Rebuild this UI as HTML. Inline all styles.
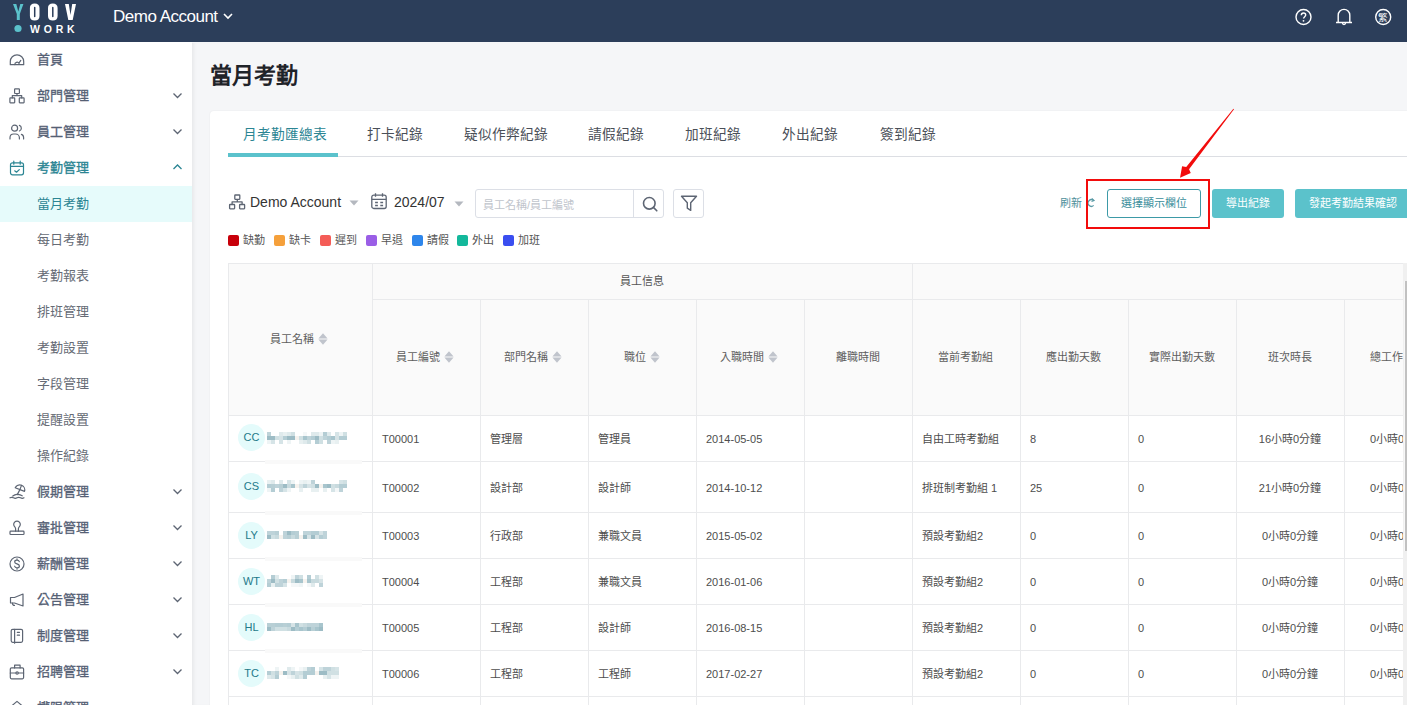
<!DOCTYPE html>
<html lang="zh-TW">
<head>
<meta charset="utf-8">
<style>
*{box-sizing:border-box;margin:0;padding:0}
html,body{width:1407px;height:705px;overflow:hidden;background:#f5f6f8;font-family:"Liberation Sans",sans-serif;color:#333}
.abs{position:absolute}
#hdr{position:absolute;left:0;top:0;width:1407px;height:42px;background:#2c3e5a}
#acct{position:absolute;left:113px;top:6px;color:#fff;font-size:17px;line-height:22px;letter-spacing:-0.5px}
#side{position:absolute;left:0;top:42px;width:192px;height:663px;background:#fff}
.mi{position:absolute;left:0;width:192px;height:36px;font-size:13px;line-height:36px;color:#556074;font-weight:normal;-webkit-text-stroke:0.3px currentColor}
.mi .t{position:absolute;left:37px;top:0}
.mi svg.ic{position:absolute;left:7px;top:8px;color:#5d6573}
.mi svg.ch{position:absolute;left:172px;top:13px;color:#5d6573}
.mi.sub{color:#666b75;font-weight:normal;-webkit-text-stroke:0}
.mi.act,.mi.act svg.ic,.mi.act svg.ch{color:#2b8593}
.mi.asub{background:#e6fbfb;color:#2b8593}
#main{position:absolute;left:192px;top:43px;width:1215px;height:662px;background:#f5f6f8;box-shadow:inset 4px 0 4px -3px rgba(0,0,0,.08)}
#title{position:absolute;left:210px;top:61px;font-size:22px;font-weight:bold;color:#1f2329;line-height:30px}
#card{position:absolute;left:210px;top:111px;width:1210px;height:600px;background:#fff;border-radius:4px;box-shadow:0 0 2px rgba(0,0,0,.07)}
.tab{position:absolute;top:125px;font-size:13.7px;line-height:20px;color:#4a4f58}
.tab.tact{color:#2b8593}
.tb{font-size:14px;line-height:18px;color:#333}
.ph{font-size:11px;line-height:14px;color:#c0c4cc}
.rf{font-size:11px;line-height:14px;color:#4f8f9b}
.btn-o{border:1px solid #3d9aa7;border-radius:3px;color:#3a8e9b;font-size:11px;line-height:27px;text-align:center;background:#fff}
.btn-f{border-radius:3px;background:#5bc2cb;color:#fff;font-size:11px;line-height:29px;text-align:center}
.legend{position:absolute;top:233px;font-size:11px;line-height:14px;color:#555}
.sq{position:absolute;top:235px;width:11px;height:11px;border-radius:2px}
.th{position:absolute;font-size:11px;line-height:36px;text-align:center;color:#555}
.thx{position:absolute;font-size:11px;line-height:16px;color:#5e5e5e;white-space:nowrap}
.td{position:absolute;font-size:11px;line-height:16px;color:#4d4d4d;white-space:nowrap}
.av{position:absolute;width:27px;height:27px;border-radius:50%;background:#e4fbfb;color:#23798a;font-size:11px;line-height:27px;text-align:center}
</style>
</head>
<body>
<div id="hdr">
  <svg class="abs" style="left:0;top:0" width="100" height="42" viewBox="0 0 100 42">
    <path d="M13 4h3.3l2 7.5 2-7.5h3.1l-3.6 10v6h-3v-6z" fill="#5bc2cc"/>
    <path d="M34.7 3.5c3.1 0 4.8 1.6 4.8 4.5v8c0 3-1.7 4.6-4.8 4.6s-4.8-1.6-4.8-4.6V8c0-2.9 1.7-4.5 4.8-4.5zm0 3.3c-.45 0-.75.3-.75.8v8.8c0 .5.3.8.75.8s.75-.3.75-.8V7.6c0-.5-.3-.8-.75-.8z" fill="#fff"/>
    <path d="M52.8 3.5c3.1 0 4.8 1.6 4.8 4.5v8c0 3-1.7 4.6-4.8 4.6s-4.8-1.6-4.8-4.6V8c0-2.9 1.7-4.5 4.8-4.5zm0 3.3c-.45 0-.75.3-.75.8v8.8c0 .5.3.8.75.8s.75-.3.75-.8V7.6c0-.5-.3-.8-.75-.8z" fill="#fff"/>
    <path d="M65 4h3.8l1.7 11 1.7-11H76l-3.3 16h-4.4z" fill="#fff"/>
    <circle cx="18" cy="28.5" r="3.6" fill="#5bc2cc"/>
    <text x="30" y="32.8" fill="#fff" font-family="Liberation Sans" font-weight="bold" font-size="10.5" letter-spacing="3.8">WORK</text>
  </svg>
  <div id="acct">Demo Account <svg width="12" height="10" viewBox="0 0 12 10" style="vertical-align:1px"><path d="M2 3l4 4 4-4" stroke="#fff" stroke-width="1.6" fill="none"/></svg></div>
  <svg class="abs" style="left:1294px;top:8px" width="20" height="20" viewBox="0 0 20 20">
    <circle cx="9.5" cy="9" r="7.5" stroke="#fff" stroke-width="1.4" fill="none"/>
    <path d="M7.3 7.2c0-1.3 1-2.2 2.2-2.2s2.2.9 2.2 2.1c0 1.6-2.1 1.6-2.1 3.4" stroke="#fff" stroke-width="1.4" fill="none"/>
    <circle cx="9.5" cy="12.8" r=".9" fill="#fff"/>
  </svg>
  <svg class="abs" style="left:1334px;top:8px" width="20" height="20" viewBox="0 0 20 20">
    <path d="M2 14.5h16M4.2 14.5V7.2a5.8 5.8 0 0 1 11.6 0v7.3" stroke="#fff" stroke-width="1.4" fill="none"/>
    <path d="M8.5 15a1.5 1.5 0 0 0 3 0" stroke="#fff" stroke-width="1.3" fill="none"/>
  </svg>
  <svg class="abs" style="left:1374px;top:8px" width="20" height="20" viewBox="0 0 20 20">
    <circle cx="9.2" cy="9" r="7.5" stroke="#fff" stroke-width="1.4" fill="none"/>
    <text x="9.2" y="12.6" text-anchor="middle" fill="#fff" font-size="9.5">繁</text>
  </svg>
</div>

<div id="side"></div>
<div class="mi" style="top:42px"><svg class="ic" width="20" height="20" viewBox="0 0 20 20" fill="none" stroke="currentColor" stroke-width="1.2" stroke-linecap="round" stroke-linejoin="round"><path d="M3.3 14.7V11.5a6.7 6.7 0 0 1 13.4 0v3.2z"/><path d="M7.8 14.6a2.3 2.3 0 0 1 4.3-1.2M11.9 13.1l1.9-2.7"/></svg><span class="t">首頁</span></div>
<div class="mi" style="top:78px"><svg class="ic" width="20" height="20" viewBox="0 0 20 20" fill="none" stroke="currentColor" stroke-width="1.2" stroke-linecap="round" stroke-linejoin="round"><rect x="7.6" y="2.9" width="4.8" height="4.6" rx=".5"/><rect x="2.9" y="11.9" width="4.8" height="4.9" rx=".5"/><rect x="12.3" y="11.9" width="4.8" height="4.9" rx=".5"/><path d="M10 7.5v2.1M5.3 11.9V9.6h9.4v2.3"/></svg><span class="t">部門管理</span><svg class="ch" width="11" height="9" viewBox="0 0 11 9" fill="none" stroke="currentColor" stroke-width="1.3"><path d="M1.5 2.5l4 4 4-4"/></svg></div>
<div class="mi" style="top:114px"><svg class="ic" width="20" height="20" viewBox="0 0 20 20" fill="none" stroke="currentColor" stroke-width="1.2" stroke-linecap="round" stroke-linejoin="round"><circle cx="7.6" cy="6.2" r="3"/><path d="M3 17v-1.3C3 13.6 4.6 12 6.7 12h1.9c2.1 0 3.8 1.6 3.8 3.7V17"/><path d="M12.4 3.4a3 3 0 0 1 0 5.6M14.4 12.3c1.4.4 2.2 1.6 2.2 3.2V17"/></svg><span class="t">員工管理</span><svg class="ch" width="11" height="9" viewBox="0 0 11 9" fill="none" stroke="currentColor" stroke-width="1.3"><path d="M1.5 2.5l4 4 4-4"/></svg></div>
<div class="mi act" style="top:150px"><svg class="ic" width="20" height="20" viewBox="0 0 20 20" fill="none" stroke="currentColor" stroke-width="1.2" stroke-linecap="round" stroke-linejoin="round"><rect x="3.5" y="4.8" width="13" height="12" rx="2"/><path d="M3.5 8.3h13M6.8 3.2v3M13.2 3.2v3M7.7 12.8l1.8 1.4 2.8-2.6"/></svg><span class="t">考勤管理</span><svg class="ch" width="11" height="9" viewBox="0 0 11 9" fill="none" stroke="currentColor" stroke-width="1.3"><path d="M1.5 6l4-4 4 4"/></svg></div>
<div class="mi sub asub" style="top:186px"><span class="t">當月考勤</span></div>
<div class="mi sub" style="top:222px"><span class="t">每日考勤</span></div>
<div class="mi sub" style="top:258px"><span class="t">考勤報表</span></div>
<div class="mi sub" style="top:294px"><span class="t">排班管理</span></div>
<div class="mi sub" style="top:330px"><span class="t">考勤設置</span></div>
<div class="mi sub" style="top:366px"><span class="t">字段管理</span></div>
<div class="mi sub" style="top:402px"><span class="t">提醒設置</span></div>
<div class="mi sub" style="top:438px"><span class="t">操作紀錄</span></div>
<div class="mi" style="top:474px"><svg class="ic" width="20" height="20" viewBox="0 0 20 20" fill="none" stroke="currentColor" stroke-width="1.2" stroke-linecap="round" stroke-linejoin="round"><path d="M8.2 5.8a5 5 0 0 1 9.3 3.6z"/><path d="M12.9 7.6l1.6-4.2M12.9 7.6l-2.6 5"/><path d="M5.8 14q2.4-2 5-1.6t4.4 1.4"/><path d="M3 15.8q1.7-1 3.5 0t3.5 0 3.5 0 3.5 0"/></svg><span class="t">假期管理</span><svg class="ch" width="11" height="9" viewBox="0 0 11 9" fill="none" stroke="currentColor" stroke-width="1.3"><path d="M1.5 2.5l4 4 4-4"/></svg></div>
<div class="mi" style="top:510px"><svg class="ic" width="20" height="20" viewBox="0 0 20 20" fill="none" stroke="currentColor" stroke-width="1.2" stroke-linecap="round" stroke-linejoin="round"><path d="M8.6 13.2v-2.4c0-.8-.3-1.3-.8-1.9a3.3 3.3 0 1 1 4.4 0c-.5.6-.8 1.1-.8 1.9v2.4"/><rect x="3" y="13.2" width="14" height="3.3" rx=".8"/></svg><span class="t">審批管理</span><svg class="ch" width="11" height="9" viewBox="0 0 11 9" fill="none" stroke="currentColor" stroke-width="1.3"><path d="M1.5 2.5l4 4 4-4"/></svg></div>
<div class="mi" style="top:546px"><svg class="ic" width="20" height="20" viewBox="0 0 20 20" fill="none" stroke="currentColor" stroke-width="1.2" stroke-linecap="round" stroke-linejoin="round"><circle cx="10" cy="10" r="7"/><path d="M12.3 7.6c-.3-1-1.2-1.5-2.3-1.5-1.3 0-2.3.7-2.3 1.8 0 2.4 4.7 1.5 4.7 4 0 1.1-1 1.9-2.4 1.9-1.2 0-2.1-.6-2.4-1.6M10 4.8v1.3M10 13.8v1.4"/></svg><span class="t">薪酬管理</span><svg class="ch" width="11" height="9" viewBox="0 0 11 9" fill="none" stroke="currentColor" stroke-width="1.3"><path d="M1.5 2.5l4 4 4-4"/></svg></div>
<div class="mi" style="top:582px"><svg class="ic" width="20" height="20" viewBox="0 0 20 20" fill="none" stroke="currentColor" stroke-width="1.2" stroke-linecap="round" stroke-linejoin="round"><path d="M3.5 7.5h4l8.5-3.5v12L7.5 13h-4z"/><path d="M5.5 13.2c0 1.3.8 2.2 2 2.2"/></svg><span class="t">公告管理</span><svg class="ch" width="11" height="9" viewBox="0 0 11 9" fill="none" stroke="currentColor" stroke-width="1.3"><path d="M1.5 2.5l4 4 4-4"/></svg></div>
<div class="mi" style="top:618px"><svg class="ic" width="20" height="20" viewBox="0 0 20 20" fill="none" stroke="currentColor" stroke-width="1.2" stroke-linecap="round" stroke-linejoin="round"><rect x="4.2" y="3.3" width="11.4" height="13" rx="1.5"/><path d="M7.6 3.3v13.9M10.3 6.3h2.2M10.3 9.2h2.2"/></svg><span class="t">制度管理</span><svg class="ch" width="11" height="9" viewBox="0 0 11 9" fill="none" stroke="currentColor" stroke-width="1.3"><path d="M1.5 2.5l4 4 4-4"/></svg></div>
<div class="mi" style="top:654px"><svg class="ic" width="20" height="20" viewBox="0 0 20 20" fill="none" stroke="currentColor" stroke-width="1.2" stroke-linecap="round" stroke-linejoin="round"><rect x="3.3" y="5.9" width="13.3" height="10.9" rx="1.2"/><path d="M7.6 5.9V3.2h5.5v2.7M3.3 11h5.6M11.3 11h5.3"/><circle cx="10.1" cy="11" r="1.2"/></svg><span class="t">招聘管理</span><svg class="ch" width="11" height="9" viewBox="0 0 11 9" fill="none" stroke="currentColor" stroke-width="1.3"><path d="M1.5 2.5l4 4 4-4"/></svg></div>
<div class="mi" style="top:690px"><svg class="ic" width="20" height="20" viewBox="0 0 20 20" fill="none" stroke="currentColor" stroke-width="1.2" stroke-linecap="round" stroke-linejoin="round"><path d="M2.8 9.5L10 3.4l7.2 6.1"/></svg><span class="t">權限管理</span><svg class="ch" width="11" height="9" viewBox="0 0 11 9" fill="none" stroke="currentColor" stroke-width="1.3"><path d="M1.5 2.5l4 4 4-4"/></svg></div>
<div id="main"></div>
<div id="title">當月考勤</div>
<div id="card"></div>
<!--MAIN-->
<div class="tab tact" style="left:243px">月考勤匯總表</div>
<div class="tab" style="left:367px">打卡紀錄</div>
<div class="tab" style="left:464px">疑似作弊紀錄</div>
<div class="tab" style="left:588px">請假紀錄</div>
<div class="tab" style="left:685px">加班紀錄</div>
<div class="tab" style="left:782px">外出紀錄</div>
<div class="tab" style="left:880px">簽到紀錄</div>
<div class="abs" style="left:228px;top:156px;width:1179px;height:1px;background:#dcdee3"></div>
<div class="abs" style="left:228px;top:153px;width:110px;height:4px;background:#5bc2cc"></div>
<svg class="abs" style="left:227px;top:193px" width="20" height="18" viewBox="0 0 20 18" fill="none" stroke="#5d6573" stroke-width="1.3" stroke-linejoin="round">
<rect x="7.8" y="2" width="5" height="4.3" rx=".5"/><rect x="2.6" y="11.5" width="5" height="4.3" rx=".5"/><rect x="12.6" y="11.5" width="5" height="4.3" rx=".5"/><path d="M10.3 6.3v2.6M5.1 11.5V8.9h10v2.6"/></svg>
<div class="abs tb" style="left:250px;top:193px">Demo Account</div>
<svg class="abs" style="left:349px;top:200px" width="10" height="6" viewBox="0 0 10 6"><path d="M0.5 0.5h9l-4.5 5z" fill="#b4b8bf"/></svg>
<svg class="abs" style="left:370px;top:192px" width="18" height="18" viewBox="0 0 18 18" fill="none" stroke="#5d6573" stroke-width="1.3">
<rect x="1.8" y="3.2" width="14.4" height="13.3" rx="2"/><path d="M1.8 7.3h14.4M5.5 1.3v3.4M12.5 1.3v3.4"/><path d="M5.1 10.4h2.8M10.3 10.4h2.8M5.1 13.4h2.8M10.3 13.4h2.8" stroke-width="1.5"/></svg>
<div class="abs tb" style="left:394px;top:193px">2024/07</div>
<svg class="abs" style="left:454px;top:201px" width="10" height="6" viewBox="0 0 10 6"><path d="M0.5 0.5h9l-4.5 5z" fill="#b4b8bf"/></svg>
<div class="abs" style="left:475px;top:189px;width:189px;height:29px;border:1px solid #dcdfe6;border-radius:3px;background:#fff"></div>
<div class="abs" style="left:633px;top:190px;width:1px;height:27px;background:#dcdfe6"></div>
<div class="abs ph" style="left:483px;top:197.5px">員工名稱/員工編號</div>
<svg class="abs" style="left:640px;top:194px" width="20" height="20" viewBox="0 0 20 20" fill="none" stroke="#5d6573" stroke-width="1.6"><circle cx="9.3" cy="9.3" r="5.8"/><path d="M13.4 13.4l3.4 3.4" stroke-linecap="round"/></svg>
<div class="abs" style="left:673px;top:189px;width:31px;height:29px;border:1px solid #dcdfe6;border-radius:3px;background:#fff"></div>
<svg class="abs" style="left:679px;top:194px" width="20" height="18" viewBox="0 0 20 18" fill="none" stroke="#5d6573" stroke-width="1.4" stroke-linejoin="round"><path d="M2.5 2.3h15l-5.8 6.5v7.6l-3.4-2.2V8.8z"/></svg>
<div class="abs rf" style="left:1060px;top:196px">刷新</div>
<svg class="abs" style="left:1086px;top:197px" width="10" height="12" viewBox="0 0 10 12" fill="none" stroke="#5a9aa6" stroke-width="1.3"><path d="M7.6 3.6A3.3 3.3 0 1 0 7.6 8.4"/><path d="M5.8 1.5l2.3 2.1-2.6 1" stroke-width="1.1"/></svg>
<div class="abs btn-o" style="left:1107px;top:189px;width:94px;height:29px">選擇顯示欄位</div>
<div class="abs btn-f" style="left:1212px;top:189px;width:72px;height:29px">導出紀錄</div>
<div class="abs btn-f" style="left:1295px;top:189px;width:116px;height:29px;padding-left:14px;text-align:left">發起考勤結果確認</div>
<div class="abs" style="left:1086px;top:179px;width:124px;height:50px;border:2px solid #f20c0c"></div>
<svg class="abs" style="left:1170px;top:105px" width="70" height="80" viewBox="0 0 70 80"><path d="M64 4.25L19.07 64.2 20.75 68.06 10.04 72.87 12.09 61.3 16.23 62 63.39 3.75z" fill="#f20c0c"/></svg>
<div class="sq" style="left:228px;background:#c8000a"></div><div class="legend" style="left:243px">缺勤</div>
<div class="sq" style="left:274px;background:#f5a03b"></div><div class="legend" style="left:289px">缺卡</div>
<div class="sq" style="left:320px;background:#f45c57"></div><div class="legend" style="left:335px">遲到</div>
<div class="sq" style="left:366px;background:#9a5ee6"></div><div class="legend" style="left:381px">早退</div>
<div class="sq" style="left:412px;background:#2e86eb"></div><div class="legend" style="left:427px">請假</div>
<div class="sq" style="left:457px;background:#13b89b"></div><div class="legend" style="left:472px">外出</div>
<div class="sq" style="left:503px;background:#3a4ef0"></div><div class="legend" style="left:518px">加班</div>
<!--TABLE-->
<div class="abs" style="left:228px;top:263px;width:1200px;height:152px;background:#fafafa"></div>
<div class="abs" style="left:228px;top:263px;width:1200px;height:1px;background:#e9eaec"></div>
<div class="abs" style="left:372px;top:299px;width:1100px;height:1px;background:#e9eaec"></div>
<div class="abs" style="left:228px;top:415px;width:1200px;height:1px;background:#e9eaec"></div>
<div class="abs" style="left:228px;top:461px;width:1200px;height:1px;background:#e9eaec"></div>
<div class="abs" style="left:228px;top:512px;width:1200px;height:1px;background:#e9eaec"></div>
<div class="abs" style="left:228px;top:558px;width:1200px;height:1px;background:#e9eaec"></div>
<div class="abs" style="left:228px;top:604px;width:1200px;height:1px;background:#e9eaec"></div>
<div class="abs" style="left:228px;top:650px;width:1200px;height:1px;background:#e9eaec"></div>
<div class="abs" style="left:228px;top:696px;width:1200px;height:1px;background:#e9eaec"></div>
<div class="abs" style="left:228px;top:742px;width:1200px;height:1px;background:#e9eaec"></div>
<div class="abs" style="left:228px;top:263px;width:1px;height:500px;background:#e9eaec"></div>
<div class="abs" style="left:372px;top:263px;width:1px;height:442px;background:#e9eaec"></div>
<div class="abs" style="left:480px;top:299px;width:1px;height:406px;background:#e9eaec"></div>
<div class="abs" style="left:588px;top:299px;width:1px;height:406px;background:#e9eaec"></div>
<div class="abs" style="left:696px;top:299px;width:1px;height:406px;background:#e9eaec"></div>
<div class="abs" style="left:804px;top:299px;width:1px;height:406px;background:#e9eaec"></div>
<div class="abs" style="left:912px;top:263px;width:1px;height:442px;background:#e9eaec"></div>
<div class="abs" style="left:1020px;top:299px;width:1px;height:406px;background:#e9eaec"></div>
<div class="abs" style="left:1128px;top:299px;width:1px;height:406px;background:#e9eaec"></div>
<div class="abs" style="left:1236px;top:299px;width:1px;height:406px;background:#e9eaec"></div>
<div class="abs" style="left:1344px;top:299px;width:1px;height:406px;background:#e9eaec"></div>
<div class="th" style="left:372px;top:263px;width:540px;height:36px">員工信息</div>
<div class="thx" style="left:270px;top:331px">員工名稱</div>
<svg class="abs" style="left:318px;top:333px" width="10" height="12" viewBox="0 0 10 12"><path d="M5 0.3L9.6 5.4H0.4z M5 11.7L9.6 6.6H0.4z" fill="#c0c4cc"/></svg>
<div class="thx" style="left:396px;top:349px">員工編號</div>
<svg class="abs" style="left:444px;top:351px" width="10" height="12" viewBox="0 0 10 12"><path d="M5 0.3L9.6 5.4H0.4z M5 11.7L9.6 6.6H0.4z" fill="#c0c4cc"/></svg>
<div class="thx" style="left:504px;top:349px">部門名稱</div>
<svg class="abs" style="left:552px;top:351px" width="10" height="12" viewBox="0 0 10 12"><path d="M5 0.3L9.6 5.4H0.4z M5 11.7L9.6 6.6H0.4z" fill="#c0c4cc"/></svg>
<div class="thx" style="left:624px;top:349px">職位</div>
<svg class="abs" style="left:650px;top:351px" width="10" height="12" viewBox="0 0 10 12"><path d="M5 0.3L9.6 5.4H0.4z M5 11.7L9.6 6.6H0.4z" fill="#c0c4cc"/></svg>
<div class="thx" style="left:720px;top:349px">入職時間</div>
<svg class="abs" style="left:768px;top:351px" width="10" height="12" viewBox="0 0 10 12"><path d="M5 0.3L9.6 5.4H0.4z M5 11.7L9.6 6.6H0.4z" fill="#c0c4cc"/></svg>
<div class="thx" style="left:836px;top:349px">離職時間</div>
<div class="thx" style="left:938px;top:349px">當前考勤組</div>
<div class="thx" style="left:1046px;top:349px">應出勤天數</div>
<div class="thx" style="left:1149px;top:349px">實際出勤天數</div>
<div class="thx" style="left:1268px;top:349px">班次時長</div>
<div class="thx" style="left:1370px;top:349px">總工作時長</div>
<div class="av" style="left:238px;top:424px">CC</div>
<svg class="abs" style="left:267px;top:432px" width="84" height="12"><rect x="0" y="0" width="4" height="4" fill="#bed3d9"/><rect x="0" y="4" width="4" height="4" fill="#9dbcc5"/><rect x="0" y="8" width="4" height="4" fill="#eef4f5"/><rect x="4" y="4" width="4" height="4" fill="#9dbcc5"/><rect x="4" y="8" width="4" height="4" fill="#d6e4e7"/><rect x="8" y="4" width="4" height="4" fill="#d0e0e3"/><rect x="12" y="0" width="4" height="4" fill="#dfeaec"/><rect x="12" y="4" width="4" height="4" fill="#d6e3e6"/><rect x="12" y="8" width="4" height="4" fill="#d6e4e7"/><rect x="16" y="0" width="4" height="4" fill="#e8f0f1"/><rect x="16" y="4" width="4" height="4" fill="#b4cdd4"/><rect x="20" y="0" width="4" height="4" fill="#dfeaec"/><rect x="20" y="4" width="4" height="4" fill="#9dbcc5"/><rect x="20" y="8" width="4" height="4" fill="#eef4f5"/><rect x="24" y="0" width="4" height="4" fill="#d0e0e3"/><rect x="24" y="4" width="4" height="4" fill="#9dbcc5"/><rect x="28" y="4" width="4" height="4" fill="#f5f2ee"/><rect x="32" y="4" width="4" height="4" fill="#d0e0e3"/><rect x="32" y="8" width="4" height="4" fill="#e8f0f1"/><rect x="36" y="0" width="4" height="4" fill="#f4f7f8"/><rect x="36" y="4" width="4" height="4" fill="#a8c5cd"/><rect x="36" y="8" width="4" height="4" fill="#dfeaec"/><rect x="40" y="4" width="4" height="4" fill="#bed3d9"/><rect x="40" y="8" width="4" height="4" fill="#d0e0e3"/><rect x="44" y="0" width="4" height="4" fill="#dfeaec"/><rect x="44" y="4" width="4" height="4" fill="#b4cdd4"/><rect x="48" y="0" width="4" height="4" fill="#dfeaec"/><rect x="48" y="4" width="4" height="4" fill="#9dbcc5"/><rect x="48" y="8" width="4" height="4" fill="#b4cdd4"/><rect x="52" y="0" width="4" height="4" fill="#eef4f5"/><rect x="52" y="4" width="4" height="4" fill="#d0e0e3"/><rect x="52" y="8" width="4" height="4" fill="#d0e0e3"/><rect x="56" y="0" width="4" height="4" fill="#b4cdd4"/><rect x="56" y="4" width="4" height="4" fill="#bed3d9"/><rect x="60" y="0" width="4" height="4" fill="#dfeaec"/><rect x="60" y="4" width="4" height="4" fill="#b4cdd4"/><rect x="60" y="8" width="4" height="4" fill="#bed3d9"/><rect x="64" y="4" width="4" height="4" fill="#a8c5cd"/><rect x="64" y="8" width="4" height="4" fill="#eef4f5"/><rect x="68" y="0" width="4" height="4" fill="#d6e4e7"/><rect x="68" y="4" width="4" height="4" fill="#d6e3e6"/><rect x="68" y="8" width="4" height="4" fill="#e8f0f1"/><rect x="72" y="0" width="4" height="4" fill="#eef4f5"/><rect x="72" y="4" width="4" height="4" fill="#b4cdd4"/><rect x="76" y="0" width="4" height="4" fill="#d0e0e3"/><rect x="76" y="4" width="4" height="4" fill="#b4cdd4"/></svg>
<div class="td" style="left:382px;top:431px">T00001</div>
<div class="td" style="left:490px;top:431px">管理層</div>
<div class="td" style="left:598px;top:431px">管理員</div>
<div class="td" style="left:706px;top:431px">2014-05-05</div>
<div class="td" style="left:922px;top:431px">自由工時考勤組</div>
<div class="td" style="left:1030px;top:431px">8</div>
<div class="td" style="left:1138px;top:431px">0</div>
<div class="td" style="left:1236px;width:108px;text-align:center;top:431px">16小時0分鐘</div>
<div class="td" style="left:1344px;width:108px;text-align:center;top:431px">0小時0分鐘</div>
<div class="av" style="left:238px;top:473px">CS</div>
<svg class="abs" style="left:267px;top:480px" width="84" height="12"><rect x="0" y="0" width="4" height="4" fill="#e8f0f1"/><rect x="0" y="4" width="4" height="4" fill="#b4cdd4"/><rect x="0" y="8" width="4" height="4" fill="#eef4f5"/><rect x="4" y="0" width="4" height="4" fill="#dfeaec"/><rect x="4" y="4" width="4" height="4" fill="#b8cfd5"/><rect x="4" y="8" width="4" height="4" fill="#b4cdd4"/><rect x="8" y="4" width="4" height="4" fill="#bed3d9"/><rect x="12" y="0" width="4" height="4" fill="#dfeaec"/><rect x="12" y="4" width="4" height="4" fill="#b8cfd5"/><rect x="12" y="8" width="4" height="4" fill="#bed3d9"/><rect x="16" y="4" width="4" height="4" fill="#9dbcc5"/><rect x="16" y="8" width="4" height="4" fill="#d6e4e7"/><rect x="20" y="0" width="4" height="4" fill="#d6e4e7"/><rect x="20" y="4" width="4" height="4" fill="#c8dade"/><rect x="20" y="8" width="4" height="4" fill="#eef4f5"/><rect x="24" y="0" width="4" height="4" fill="#eef4f5"/><rect x="24" y="4" width="4" height="4" fill="#a8c5cd"/><rect x="28" y="4" width="4" height="4" fill="#f5f2ee"/><rect x="32" y="0" width="4" height="4" fill="#eef4f5"/><rect x="32" y="4" width="4" height="4" fill="#d6e3e6"/><rect x="32" y="8" width="4" height="4" fill="#e8f0f1"/><rect x="36" y="0" width="4" height="4" fill="#e8f0f1"/><rect x="36" y="4" width="4" height="4" fill="#bed3d9"/><rect x="40" y="0" width="4" height="4" fill="#eef4f5"/><rect x="40" y="4" width="4" height="4" fill="#d6e3e6"/><rect x="44" y="0" width="4" height="4" fill="#bed3d9"/><rect x="44" y="4" width="4" height="4" fill="#d0e0e3"/><rect x="44" y="8" width="4" height="4" fill="#e8f0f1"/><rect x="48" y="4" width="4" height="4" fill="#9dbcc5"/><rect x="48" y="8" width="4" height="4" fill="#e8f0f1"/><rect x="52" y="4" width="4" height="4" fill="#f5f2ee"/><rect x="56" y="4" width="4" height="4" fill="#a8c5cd"/><rect x="56" y="8" width="4" height="4" fill="#e8f0f1"/><rect x="60" y="4" width="4" height="4" fill="#9dbcc5"/><rect x="64" y="4" width="4" height="4" fill="#d0e0e3"/><rect x="64" y="8" width="4" height="4" fill="#d6e4e7"/><rect x="68" y="4" width="4" height="4" fill="#c8dade"/><rect x="68" y="8" width="4" height="4" fill="#f4f7f8"/><rect x="72" y="0" width="4" height="4" fill="#d6e4e7"/><rect x="72" y="4" width="4" height="4" fill="#b4cdd4"/><rect x="72" y="8" width="4" height="4" fill="#bed3d9"/><rect x="76" y="0" width="4" height="4" fill="#d0e0e3"/><rect x="76" y="4" width="4" height="4" fill="#b4cdd4"/></svg>
<div class="td" style="left:382px;top:480px">T00002</div>
<div class="td" style="left:490px;top:480px">設計部</div>
<div class="td" style="left:598px;top:480px">設計師</div>
<div class="td" style="left:706px;top:480px">2014-10-12</div>
<div class="td" style="left:922px;top:480px">排班制考勤組 1</div>
<div class="td" style="left:1030px;top:480px">25</div>
<div class="td" style="left:1138px;top:480px">0</div>
<div class="td" style="left:1236px;width:108px;text-align:center;top:480px">21小時0分鐘</div>
<div class="td" style="left:1344px;width:108px;text-align:center;top:480px">0小時0分鐘</div>
<div class="av" style="left:238px;top:522px">LY</div>
<svg class="abs" style="left:267px;top:531px" width="64" height="8"><rect x="0" y="0" width="4" height="4" fill="#bed3d9"/><rect x="0" y="4" width="4" height="4" fill="#9dbcc5"/><rect x="4" y="0" width="4" height="4" fill="#bed3d9"/><rect x="4" y="4" width="4" height="4" fill="#d0e0e3"/><rect x="8" y="0" width="4" height="4" fill="#b8cfd5"/><rect x="8" y="4" width="4" height="4" fill="#c8dade"/><rect x="12" y="4" width="4" height="4" fill="#f5f2ee"/><rect x="16" y="0" width="4" height="4" fill="#bed3d9"/><rect x="16" y="4" width="4" height="4" fill="#bed3d9"/><rect x="20" y="0" width="4" height="4" fill="#9dbcc5"/><rect x="20" y="4" width="4" height="4" fill="#b8cfd5"/><rect x="24" y="0" width="4" height="4" fill="#b4cdd4"/><rect x="24" y="4" width="4" height="4" fill="#c8dade"/><rect x="28" y="0" width="4" height="4" fill="#b8cfd5"/><rect x="28" y="4" width="4" height="4" fill="#b8cfd5"/><rect x="32" y="4" width="4" height="4" fill="#f5f2ee"/><rect x="36" y="0" width="4" height="4" fill="#bed3d9"/><rect x="36" y="4" width="4" height="4" fill="#9dbcc5"/><rect x="40" y="0" width="4" height="4" fill="#bed3d9"/><rect x="40" y="4" width="4" height="4" fill="#d6e3e6"/><rect x="44" y="0" width="4" height="4" fill="#b4cdd4"/><rect x="44" y="4" width="4" height="4" fill="#9dbcc5"/><rect x="48" y="0" width="4" height="4" fill="#b4cdd4"/><rect x="48" y="4" width="4" height="4" fill="#d6e3e6"/><rect x="52" y="0" width="4" height="4" fill="#d6e3e6"/><rect x="52" y="4" width="4" height="4" fill="#b4cdd4"/><rect x="56" y="0" width="4" height="4" fill="#bed3d9"/><rect x="56" y="4" width="4" height="4" fill="#bed3d9"/></svg>
<div class="td" style="left:382px;top:528px">T00003</div>
<div class="td" style="left:490px;top:528px">行政部</div>
<div class="td" style="left:598px;top:528px">兼職文員</div>
<div class="td" style="left:706px;top:528px">2015-05-02</div>
<div class="td" style="left:922px;top:528px">預設考勤組2</div>
<div class="td" style="left:1030px;top:528px">0</div>
<div class="td" style="left:1138px;top:528px">0</div>
<div class="td" style="left:1236px;width:108px;text-align:center;top:528px">0小時0分鐘</div>
<div class="td" style="left:1344px;width:108px;text-align:center;top:528px">0小時0分鐘</div>
<div class="av" style="left:238px;top:568px">WT</div>
<svg class="abs" style="left:267px;top:575px" width="60" height="12"><rect x="0" y="4" width="4" height="4" fill="#bed3d9"/><rect x="0" y="8" width="4" height="4" fill="#b4cdd4"/><rect x="4" y="0" width="4" height="4" fill="#b4cdd4"/><rect x="4" y="4" width="4" height="4" fill="#9dbcc5"/><rect x="4" y="8" width="4" height="4" fill="#e8f0f1"/><rect x="8" y="0" width="4" height="4" fill="#dfeaec"/><rect x="8" y="4" width="4" height="4" fill="#d0e0e3"/><rect x="8" y="8" width="4" height="4" fill="#bed3d9"/><rect x="12" y="4" width="4" height="4" fill="#bed3d9"/><rect x="12" y="8" width="4" height="4" fill="#bed3d9"/><rect x="16" y="4" width="4" height="4" fill="#b4cdd4"/><rect x="16" y="8" width="4" height="4" fill="#d6e4e7"/><rect x="20" y="4" width="4" height="4" fill="#f5f2ee"/><rect x="24" y="0" width="4" height="4" fill="#eef4f5"/><rect x="24" y="4" width="4" height="4" fill="#c8dade"/><rect x="24" y="8" width="4" height="4" fill="#f4f7f8"/><rect x="28" y="0" width="4" height="4" fill="#bed3d9"/><rect x="28" y="4" width="4" height="4" fill="#9dbcc5"/><rect x="28" y="8" width="4" height="4" fill="#f4f7f8"/><rect x="32" y="0" width="4" height="4" fill="#d0e0e3"/><rect x="32" y="4" width="4" height="4" fill="#a8c5cd"/><rect x="32" y="8" width="4" height="4" fill="#eef4f5"/><rect x="36" y="4" width="4" height="4" fill="#f5f2ee"/><rect x="40" y="0" width="4" height="4" fill="#b4cdd4"/><rect x="40" y="4" width="4" height="4" fill="#a8c5cd"/><rect x="40" y="8" width="4" height="4" fill="#f4f7f8"/><rect x="44" y="4" width="4" height="4" fill="#c8dade"/><rect x="44" y="8" width="4" height="4" fill="#dfeaec"/><rect x="48" y="0" width="4" height="4" fill="#d0e0e3"/><rect x="48" y="4" width="4" height="4" fill="#c8dade"/><rect x="52" y="0" width="4" height="4" fill="#eef4f5"/><rect x="52" y="4" width="4" height="4" fill="#d6e3e6"/><rect x="52" y="8" width="4" height="4" fill="#bed3d9"/></svg>
<div class="td" style="left:382px;top:574px">T00004</div>
<div class="td" style="left:490px;top:574px">工程部</div>
<div class="td" style="left:598px;top:574px">兼職文員</div>
<div class="td" style="left:706px;top:574px">2016-01-06</div>
<div class="td" style="left:922px;top:574px">預設考勤組2</div>
<div class="td" style="left:1030px;top:574px">0</div>
<div class="td" style="left:1138px;top:574px">0</div>
<div class="td" style="left:1236px;width:108px;text-align:center;top:574px">0小時0分鐘</div>
<div class="td" style="left:1344px;width:108px;text-align:center;top:574px">0小時0分鐘</div>
<div class="av" style="left:238px;top:614px">HL</div>
<svg class="abs" style="left:267px;top:623px" width="60" height="8"><rect x="0" y="0" width="4" height="4" fill="#b8cfd5"/><rect x="0" y="4" width="4" height="4" fill="#9dbcc5"/><rect x="4" y="0" width="4" height="4" fill="#b8cfd5"/><rect x="4" y="4" width="4" height="4" fill="#bed3d9"/><rect x="8" y="0" width="4" height="4" fill="#b4cdd4"/><rect x="8" y="4" width="4" height="4" fill="#d0e0e3"/><rect x="12" y="0" width="4" height="4" fill="#b4cdd4"/><rect x="12" y="4" width="4" height="4" fill="#d0e0e3"/><rect x="16" y="0" width="4" height="4" fill="#b8cfd5"/><rect x="16" y="4" width="4" height="4" fill="#d0e0e3"/><rect x="20" y="0" width="4" height="4" fill="#b4cdd4"/><rect x="20" y="4" width="4" height="4" fill="#c8dade"/><rect x="24" y="0" width="4" height="4" fill="#d6e3e6"/><rect x="24" y="4" width="4" height="4" fill="#9dbcc5"/><rect x="28" y="0" width="4" height="4" fill="#a8c5cd"/><rect x="28" y="4" width="4" height="4" fill="#b4cdd4"/><rect x="32" y="0" width="4" height="4" fill="#d0e0e3"/><rect x="32" y="4" width="4" height="4" fill="#a8c5cd"/><rect x="36" y="0" width="4" height="4" fill="#c8dade"/><rect x="36" y="4" width="4" height="4" fill="#b4cdd4"/><rect x="40" y="0" width="4" height="4" fill="#bed3d9"/><rect x="40" y="4" width="4" height="4" fill="#9dbcc5"/><rect x="44" y="0" width="4" height="4" fill="#bed3d9"/><rect x="44" y="4" width="4" height="4" fill="#b8cfd5"/><rect x="48" y="0" width="4" height="4" fill="#bed3d9"/><rect x="48" y="4" width="4" height="4" fill="#a8c5cd"/><rect x="52" y="0" width="4" height="4" fill="#a8c5cd"/><rect x="52" y="4" width="4" height="4" fill="#9dbcc5"/></svg>
<div class="td" style="left:382px;top:620px">T00005</div>
<div class="td" style="left:490px;top:620px">工程部</div>
<div class="td" style="left:598px;top:620px">設計師</div>
<div class="td" style="left:706px;top:620px">2016-08-15</div>
<div class="td" style="left:922px;top:620px">預設考勤組2</div>
<div class="td" style="left:1030px;top:620px">0</div>
<div class="td" style="left:1138px;top:620px">0</div>
<div class="td" style="left:1236px;width:108px;text-align:center;top:620px">0小時0分鐘</div>
<div class="td" style="left:1344px;width:108px;text-align:center;top:620px">0小時0分鐘</div>
<div class="av" style="left:238px;top:660px">TC</div>
<svg class="abs" style="left:267px;top:667px" width="76" height="12"><rect x="0" y="4" width="4" height="4" fill="#b4cdd4"/><rect x="0" y="8" width="4" height="4" fill="#dfeaec"/><rect x="4" y="4" width="4" height="4" fill="#d0e0e3"/><rect x="4" y="8" width="4" height="4" fill="#d6e4e7"/><rect x="8" y="0" width="4" height="4" fill="#eef4f5"/><rect x="8" y="4" width="4" height="4" fill="#bed3d9"/><rect x="8" y="8" width="4" height="4" fill="#b4cdd4"/><rect x="12" y="4" width="4" height="4" fill="#f5f2ee"/><rect x="16" y="4" width="4" height="4" fill="#9dbcc5"/><rect x="20" y="0" width="4" height="4" fill="#dfeaec"/><rect x="20" y="4" width="4" height="4" fill="#d6e3e6"/><rect x="20" y="8" width="4" height="4" fill="#f4f7f8"/><rect x="24" y="0" width="4" height="4" fill="#eef4f5"/><rect x="24" y="4" width="4" height="4" fill="#bed3d9"/><rect x="24" y="8" width="4" height="4" fill="#e8f0f1"/><rect x="28" y="4" width="4" height="4" fill="#d6e3e6"/><rect x="28" y="8" width="4" height="4" fill="#d0e0e3"/><rect x="32" y="0" width="4" height="4" fill="#f4f7f8"/><rect x="32" y="4" width="4" height="4" fill="#d0e0e3"/><rect x="32" y="8" width="4" height="4" fill="#dfeaec"/><rect x="36" y="0" width="4" height="4" fill="#e8f0f1"/><rect x="36" y="4" width="4" height="4" fill="#b4cdd4"/><rect x="36" y="8" width="4" height="4" fill="#b4cdd4"/><rect x="40" y="0" width="4" height="4" fill="#bed3d9"/><rect x="40" y="4" width="4" height="4" fill="#b4cdd4"/><rect x="44" y="0" width="4" height="4" fill="#b4cdd4"/><rect x="44" y="4" width="4" height="4" fill="#b4cdd4"/><rect x="48" y="4" width="4" height="4" fill="#f5f2ee"/><rect x="52" y="0" width="4" height="4" fill="#d6e4e7"/><rect x="52" y="4" width="4" height="4" fill="#9dbcc5"/><rect x="56" y="0" width="4" height="4" fill="#bed3d9"/><rect x="56" y="4" width="4" height="4" fill="#9dbcc5"/><rect x="56" y="8" width="4" height="4" fill="#e8f0f1"/><rect x="60" y="0" width="4" height="4" fill="#bed3d9"/><rect x="60" y="4" width="4" height="4" fill="#d0e0e3"/><rect x="60" y="8" width="4" height="4" fill="#d6e4e7"/><rect x="64" y="0" width="4" height="4" fill="#d0e0e3"/><rect x="64" y="4" width="4" height="4" fill="#d0e0e3"/><rect x="64" y="8" width="4" height="4" fill="#eef4f5"/><rect x="68" y="0" width="4" height="4" fill="#d6e4e7"/><rect x="68" y="4" width="4" height="4" fill="#d0e0e3"/><rect x="68" y="8" width="4" height="4" fill="#eef4f5"/></svg>
<div class="td" style="left:382px;top:666px">T00006</div>
<div class="td" style="left:490px;top:666px">工程部</div>
<div class="td" style="left:598px;top:666px">工程師</div>
<div class="td" style="left:706px;top:666px">2017-02-27</div>
<div class="td" style="left:922px;top:666px">預設考勤組2</div>
<div class="td" style="left:1030px;top:666px">0</div>
<div class="td" style="left:1138px;top:666px">0</div>
<div class="td" style="left:1236px;width:108px;text-align:center;top:666px">0小時0分鐘</div>
<div class="td" style="left:1344px;width:108px;text-align:center;top:666px">0小時0分鐘</div>
<div class="abs" style="left:265px;top:460px;width:97px;height:4px;background:#f9f9f9"></div>
<div class="abs" style="left:265px;top:511px;width:97px;height:4px;background:#f9f9f9"></div>
<div class="abs" style="left:265px;top:557px;width:97px;height:4px;background:#f9f9f9"></div>
<div class="abs" style="left:265px;top:603px;width:97px;height:4px;background:#f9f9f9"></div>
<div class="abs" style="left:265px;top:649px;width:97px;height:4px;background:#f9f9f9"></div>
<div class="abs" style="left:1403px;top:263px;width:4px;height:442px;background:#f0f0f0"></div>
<div class="abs" style="left:1404px;top:281px;width:1px;height:270px;background:#f7f7f7"></div>
<div class="abs" style="left:1405px;top:281px;width:2px;height:270px;background:#c1c1c1"></div>
<!--/TABLE-->
<!--/MAIN-->
</body>
</html>
